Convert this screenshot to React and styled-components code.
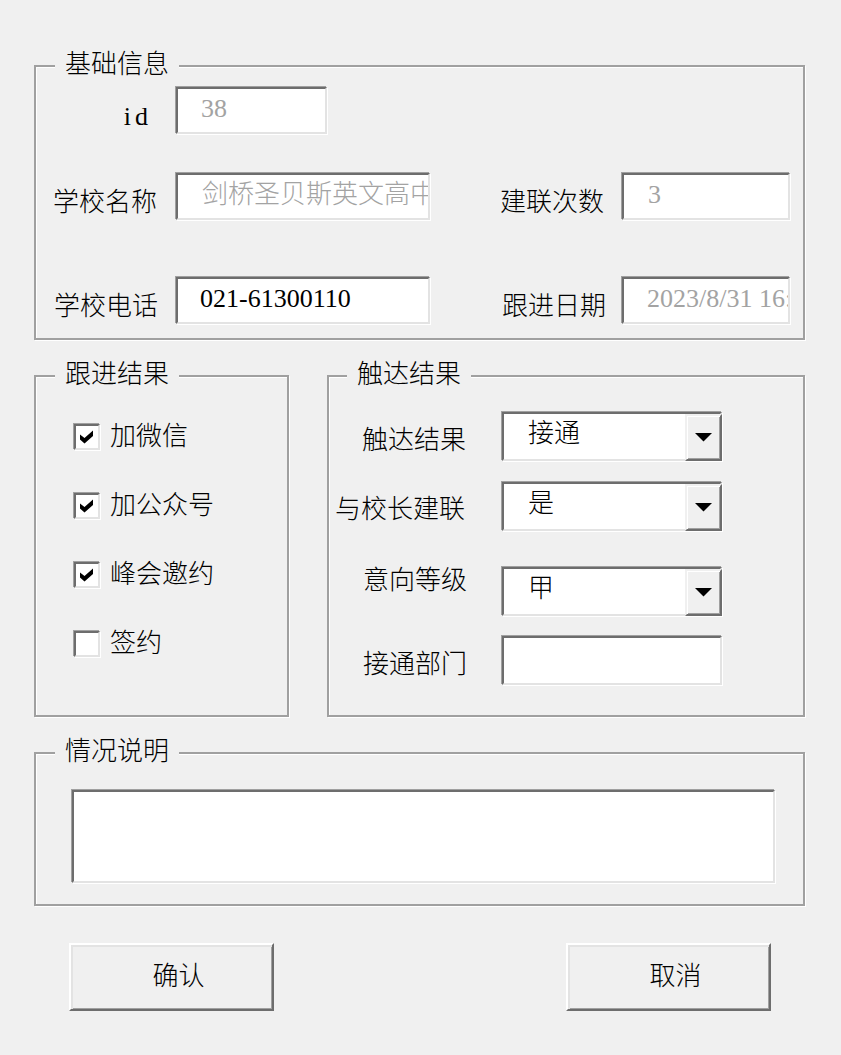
import styled, { createGlobalStyle } from "styled-components";

const GlobalStyle = createGlobalStyle`
  html, body {
    margin: 0;
    padding: 0;
    background: #f0f0f0;
  }
  body {
    font-family: "Liberation Serif", "Noto Sans CJK SC", serif;
    font-size: 26px;
    font-weight: 300;
    color: #000;
  }
`;

const Page = styled.div`
  width: 841px;
  min-height: 1055px;
  box-sizing: border-box;
  padding: 65px 0 0 34px;
  display: flex;
  flex-direction: column;
`;

const Frame = styled.div`
  position: relative;
  box-sizing: border-box;
  width: ${({ w }) => w}px;
  height: ${({ h }) => h}px;
  margin-top: ${({ mt }) => mt || 0}px;
  border: 2px solid #a0a0a0;
  box-shadow: inset 1px 1px 0 #fff, 1px 1px 0 #fff;
  padding: ${({ pad }) => pad};
  display: flex;
  flex-direction: column;
`;

const Legend = styled.div`
  position: absolute;
  top: -17px;
  left: ${({ left }) => left || 19}px;
  padding: 0 10px;
  line-height: 30px;
  background: #f0f0f0;
  white-space: nowrap;
`;

const SideBySide = styled.div`
  display: flex;
  gap: 38px;
  margin-top: 35px;
`;

const Row = styled.div`
  display: flex;
  align-items: flex-start;
  margin-top: ${({ mt }) => mt || 0}px;
`;

const Label = styled.div`
  box-sizing: border-box;
  width: ${({ w }) => w}px;
  padding-right: ${({ pr }) => pr}px;
  margin-top: ${({ dy }) => (dy === undefined ? 15 : dy)}px;
  text-align: right;
  line-height: 30px;
  white-space: nowrap;
  letter-spacing: ${({ ls }) => ls || 0}px;
`;

const sunken = `
  box-sizing: border-box;
  background: #fff;
  border-style: solid;
  border-width: 2px;
  border-color: #6d6d6d #e3e3e3 #e3e3e3 #6d6d6d;
  box-shadow: -1px -1px 0 #a0a0a0, 1px 1px 0 #fff;
`;

const TextBox = styled.div`
  ${sunken}
  width: ${({ w }) => w}px;
  height: ${({ h }) => h || 47}px;
  padding: 5px 0 0 ${({ pl }) => (pl === undefined ? 23 : pl)}px;
  line-height: 30px;
  white-space: nowrap;
  overflow: hidden;
  color: ${({ disabled }) => (disabled ? "#a3a3a3" : "#000")};
`;

const Combo = styled.div`
  ${sunken}
  width: 220px;
  height: 49px;
  display: flex;
`;

const ComboValue = styled.div`
  flex: 1;
  padding: 5px 0 0 24px;
  line-height: 30px;
  white-space: nowrap;
`;

const DropButton = styled.div`
  box-sizing: border-box;
  width: 37px;
  margin: 0 -2px -2px 0;
  background: #f0f0f0;
  border-style: solid;
  border-width: 2px;
  border-color: #f0f0f0 #6d6d6d #6d6d6d #f0f0f0;
  box-shadow: inset 1px 1px 0 #fff, inset -1px -1px 0 #a0a0a0;
  display: flex;
  align-items: center;
  justify-content: center;
`;

const CheckList = styled.div`
  display: flex;
  flex-direction: column;
  gap: 43px;
`;

const CheckRow = styled.div`
  display: flex;
  align-items: center;
  height: 26px;
`;

const CheckBox = styled.div`
  ${sunken}
  width: 26px;
  height: 26px;
  flex-shrink: 0;
  display: flex;
`;

const CheckText = styled.span`
  margin-left: 10px;
  line-height: 30px;
  white-space: nowrap;
`;

const TextArea = styled.div`
  ${sunken}
  width: 703px;
  height: 93px;
`;

const ButtonRow = styled.div`
  display: flex;
  gap: 292px;
  margin-top: 37px;
  padding-left: 35px;
`;

const Button = styled.div`
  box-sizing: border-box;
  width: 205px;
  height: 68px;
  background: #f0f0f0;
  border-style: solid;
  border-width: 2px;
  border-color: #fff #6d6d6d #6d6d6d #fff;
  box-shadow: inset 2px 2px 0 #e3e3e3, inset -1px -1px 0 #a0a0a0;
  display: flex;
  align-items: center;
  justify-content: center;
  padding-left: 14px;
  line-height: 30px;
`;

function Arrow() {
  return (
    <svg width="17" height="9" viewBox="0 0 17 9">
      <polygon points="0,0 17,0 8.5,8.5" fill="#000" />
    </svg>
  );
}

function Check({ checked, children }) {
  return (
    <CheckRow>
      <CheckBox>
        {checked && (
          <svg width="22" height="22" viewBox="0 0 22 22">
            <polygon
              points="4,8.5 8.5,12 17,4.5 17,10 8.5,17.5 4,13.5"
              fill="#000"
            />
          </svg>
        )}
      </CheckBox>
      <CheckText>{children}</CheckText>
    </CheckRow>
  );
}

function Select({ value }) {
  return (
    <Combo>
      <ComboValue>{value}</ComboValue>
      <DropButton>
        <Arrow />
      </DropButton>
    </Combo>
  );
}

export default function App() {
  return (
    <>
      <GlobalStyle />
      <Page>
        <Frame w={771} h={275} pad="20px 0 0 0">
          <Legend>基础信息</Legend>
          <Row>
            <Label w={140} pr={24} ls={4}>
              id
            </Label>
            <TextBox w={151} disabled>
              38
            </TextBox>
          </Row>
          <Row mt={39}>
            <Label w={140} pr={19}>
              学校名称
            </Label>
            <TextBox w={254} disabled pl={24}>
              剑桥圣贝斯英文高中
            </TextBox>
            <Label w={192} pr={18}>
              建联次数
            </Label>
            <TextBox w={168} disabled pl={24}>
              3
            </TextBox>
          </Row>
          <Row mt={57}>
            <Label w={140} pr={18}>
              学校电话
            </Label>
            <TextBox w={254} pl={22}>
              021-61300110
            </TextBox>
            <Label w={192} pr={16}>
              跟进日期
            </Label>
            <TextBox w={168} disabled pl={23}>
              2023/8/31 16:20:00
            </TextBox>
          </Row>
        </Frame>

        <SideBySide>
          <Frame w={255} h={342} pad="47px 0 0 38px">
            <Legend>跟进结果</Legend>
            <CheckList>
              <Check checked>加微信</Check>
              <Check checked>加公众号</Check>
              <Check checked>峰会邀约</Check>
              <Check>签约</Check>
            </CheckList>
          </Frame>

          <Frame w={478} h={342} pad="35px 0 0 0">
            <Legend left={18}>触达结果</Legend>
            <Row>
              <Label w={173} pr={36} dy={14}>
                触达结果
              </Label>
              <Select value="接通" />
            </Row>
            <Row mt={21}>
              <Label w={173} pr={37} dy={13}>
                与校长建联
              </Label>
              <Select value="是" />
            </Row>
            <Row mt={36}>
              <Label w={173} pr={35} dy={-1}>
                意向等级
              </Label>
              <Select value="甲" />
            </Row>
            <Row mt={20}>
              <Label w={173} pr={35} dy={14}>
                接通部门
              </Label>
              <TextBox w={220} h={49} />
            </Row>
          </Frame>
        </SideBySide>

        <Frame w={771} h={154} mt={35} pad="36px 0 0 36px">
          <Legend>情况说明</Legend>
          <TextArea />
        </Frame>

        <ButtonRow>
          <Button>确认</Button>
          <Button>取消</Button>
        </ButtonRow>
      </Page>
    </>
  );
}
